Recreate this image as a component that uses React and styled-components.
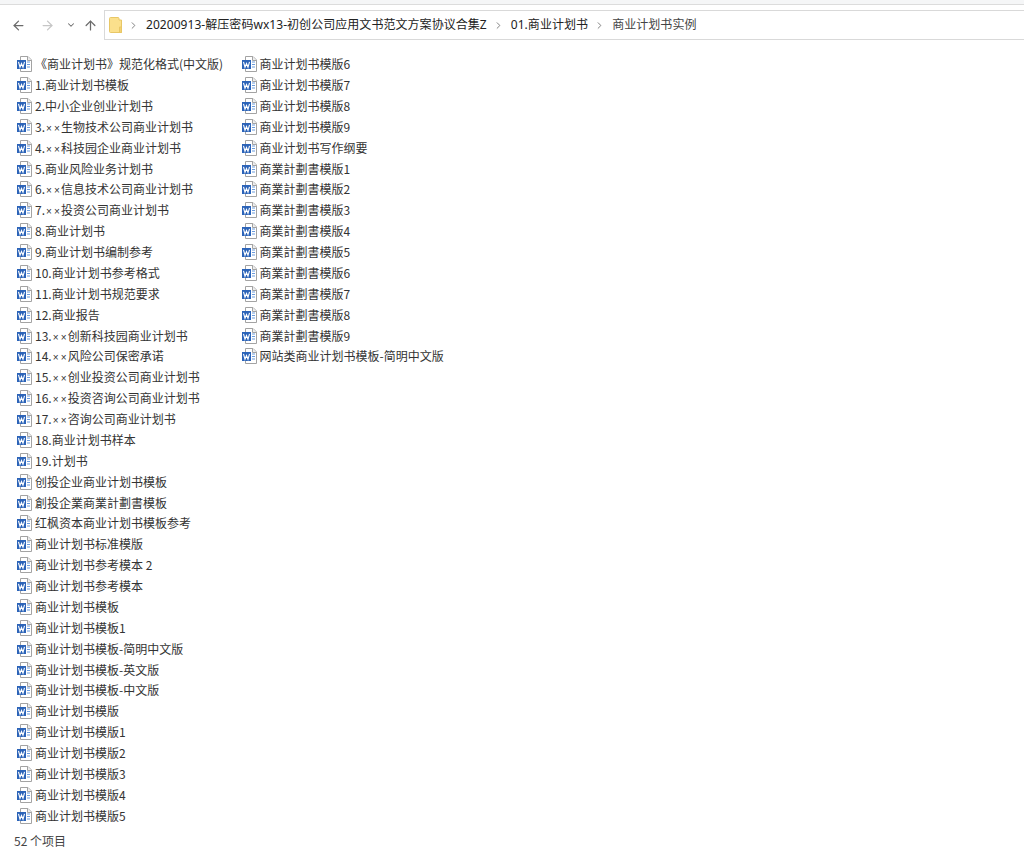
import styled, { createGlobalStyle } from "styled-components";
import { ArrowLeft, ArrowRight, ArrowUp, ChevronDown, ChevronRight } from "lucide-react";

const GlobalStyle = createGlobalStyle`
  html, body {
    margin: 0;
    padding: 0;
    background: #fff;
  }
`;

const Window = styled.div`
  width: 1024px;
  height: 850px;
  overflow: hidden;
  display: flex;
  flex-direction: column;
  background: #fff;
  color: #2b2b2b;
  font: 12px/16px "Noto Sans CJK SC", "Liberation Sans", sans-serif;
`;

const TopStrip = styled.div`
  height: 4px;
  background: #f5f6f7;
  border-bottom: 1px solid #dcdcdc;
`;

const NavRow = styled.div`
  display: flex;
  align-items: center;
  height: 30px;
  margin-top: 5px;
`;

const NavButtons = styled.div`
  width: 104px;
  display: flex;
  align-items: center;
  flex-shrink: 0;
  padding-left: 11px;
  box-sizing: border-box;
`;

const NavIcon = styled.span`
  display: flex;
  color: ${(p) => (p.$off ? "#c6c6c6" : "#6b6b6b")};
  margin-left: ${(p) => p.$gap || 0}px;
`;

const AddressBar = styled.div`
  flex: 1;
  height: 100%;
  box-sizing: border-box;
  border: 1px solid #d9d9d9;
  border-right: 0;
  display: flex;
  align-items: center;
  padding-left: 4px;
  font-family: "Noto Sans", "Noto Sans CJK SC", sans-serif;
  letter-spacing: 0.05px;
`;

const Crumb = styled.span`
  color: ${(p) => (p.$dim ? "#444" : "#222")};
  white-space: nowrap;
`;

const Sep = styled.span`
  display: flex;
  color: #777;
  margin: 0 7px 0 6px;
`;

const FileGrid = styled.div`
  flex: 1;
  display: grid;
  grid-auto-flow: column;
  grid-template-rows: repeat(37, 20.88px);
  grid-auto-columns: 224.5px;
  padding: 13.8px 0 0 17px;
`;

const FileRow = styled.div`
  display: flex;
  align-items: center;
  gap: 2px;
  white-space: nowrap;
  color: #333;
`;

const Times = styled.span`
  display: inline-block;
  width: 8px;
  text-align: center;
  font-family: "Liberation Sans", sans-serif;
  font-size: 10px;
  line-height: 0;
`;

const StatusBar = styled.div`
  height: 20px;
  box-sizing: border-box;
  padding: 2px 0 0 14px;
  color: #444;
  line-height: 18px;
`;

const WordIcon = () => (
  <svg width="16" height="16" viewBox="0 0 16 16">
    <path d="M3.5 .5H11L14.5 4V15.5H3.5Z" fill="#fff" stroke="#a3a3a3" />
    <path d="M10.5 .5V4.5H14.5" fill="#eee" stroke="#a3a3a3" />
    <rect x="0" y="4" width="9" height="9" fill="#2b63b8" />
    <path d="M1.5 5.8 3 11.2 4.5 7.5 6 11.2 7.5 5.8" fill="none" stroke="#fff" strokeWidth="1.1" />
    <path d="M10 6H13M10 8.5H13M10 11H13" stroke="#6b9bdc" />
  </svg>
);

const FolderIcon = () => (
  <svg width="13" height="16" viewBox="0 0 13 16" style={{ flexShrink: 0 }}>
    <path d="M.5 1.5Q.5 .5 1.5 .5H9Q10 .5 10 1.5V3H12.5V15.5H1.5Q.5 15.5 .5 14.5Z" fill="#fbe08c" stroke="#e8c766" />
    <path d="M10.5 10H12.5V15.5H10.5Z" fill="#f5d272" stroke="#e8c766" />
  </svg>
);

const files = [
  "《商业计划书》规范化格式(中文版)",
  "1.商业计划书模板",
  "2.中小企业创业计划书",
  "3.××生物技术公司商业计划书",
  "4.××科技园企业商业计划书",
  "5.商业风险业务计划书",
  "6.××信息技术公司商业计划书",
  "7.××投资公司商业计划书",
  "8.商业计划书",
  "9.商业计划书编制参考",
  "10.商业计划书参考格式",
  "11.商业计划书规范要求",
  "12.商业报告",
  "13.××创新科技园商业计划书",
  "14.××风险公司保密承诺",
  "15.××创业投资公司商业计划书",
  "16.××投资咨询公司商业计划书",
  "17.××咨询公司商业计划书",
  "18.商业计划书样本",
  "19.计划书",
  "创投企业商业计划书模板",
  "創投企業商業計劃書模板",
  "红枫资本商业计划书模板参考",
  "商业计划书标准模版",
  "商业计划书参考模本 2",
  "商业计划书参考模本",
  "商业计划书模板",
  "商业计划书模板1",
  "商业计划书模板-简明中文版",
  "商业计划书模板-英文版",
  "商业计划书模板-中文版",
  "商业计划书模版",
  "商业计划书模版1",
  "商业计划书模版2",
  "商业计划书模版3",
  "商业计划书模版4",
  "商业计划书模版5",
  "商业计划书模版6",
  "商业计划书模版7",
  "商业计划书模版8",
  "商业计划书模版9",
  "商业计划书写作纲要",
  "商業計劃書模版1",
  "商業計劃書模版2",
  "商業計劃書模版3",
  "商業計劃書模版4",
  "商業計劃書模版5",
  "商業計劃書模版6",
  "商業計劃書模版7",
  "商業計劃書模版8",
  "商業計劃書模版9",
  "网站类商业计划书模板-简明中文版",
];

// the × in the list is narrower than the CJK font's own glyph
const FileName = ({ name }) => {
  const parts = name.split("××");
  if (parts.length === 1) return <span>{name}</span>;
  return (
    <span>
      {parts[0]}
      <Times>×</Times>
      <Times>×</Times>
      {parts[1]}
    </span>
  );
};

export default function App() {
  return (
    <Window>
      <GlobalStyle />
      <TopStrip />
      <NavRow>
        <NavButtons>
          <NavIcon><ArrowLeft size={15} strokeWidth={2} /></NavIcon>
          <NavIcon $off $gap={14}><ArrowRight size={15} strokeWidth={2} /></NavIcon>
          <NavIcon $gap={11}><ChevronDown size={10} strokeWidth={2.5} /></NavIcon>
          <NavIcon $gap={7}><ArrowUp size={15} strokeWidth={2} /></NavIcon>
        </NavButtons>
        <AddressBar>
          <FolderIcon />
          <Sep><ChevronRight size={11} strokeWidth={2} /></Sep>
          <Crumb>20200913-解压密码wx13-初创公司应用文书范文方案协议合集Z</Crumb>
          <Sep><ChevronRight size={11} strokeWidth={2} /></Sep>
          <Crumb>01.商业计划书</Crumb>
          <Sep><ChevronRight size={11} strokeWidth={2} /></Sep>
          <Crumb $dim>商业计划书实例</Crumb>
        </AddressBar>
      </NavRow>
      <FileGrid>
        {files.map((name) => (
          <FileRow key={name}>
            <WordIcon />
            <FileName name={name} />
          </FileRow>
        ))}
      </FileGrid>
      <StatusBar>52 个项目</StatusBar>
    </Window>
  );
}
